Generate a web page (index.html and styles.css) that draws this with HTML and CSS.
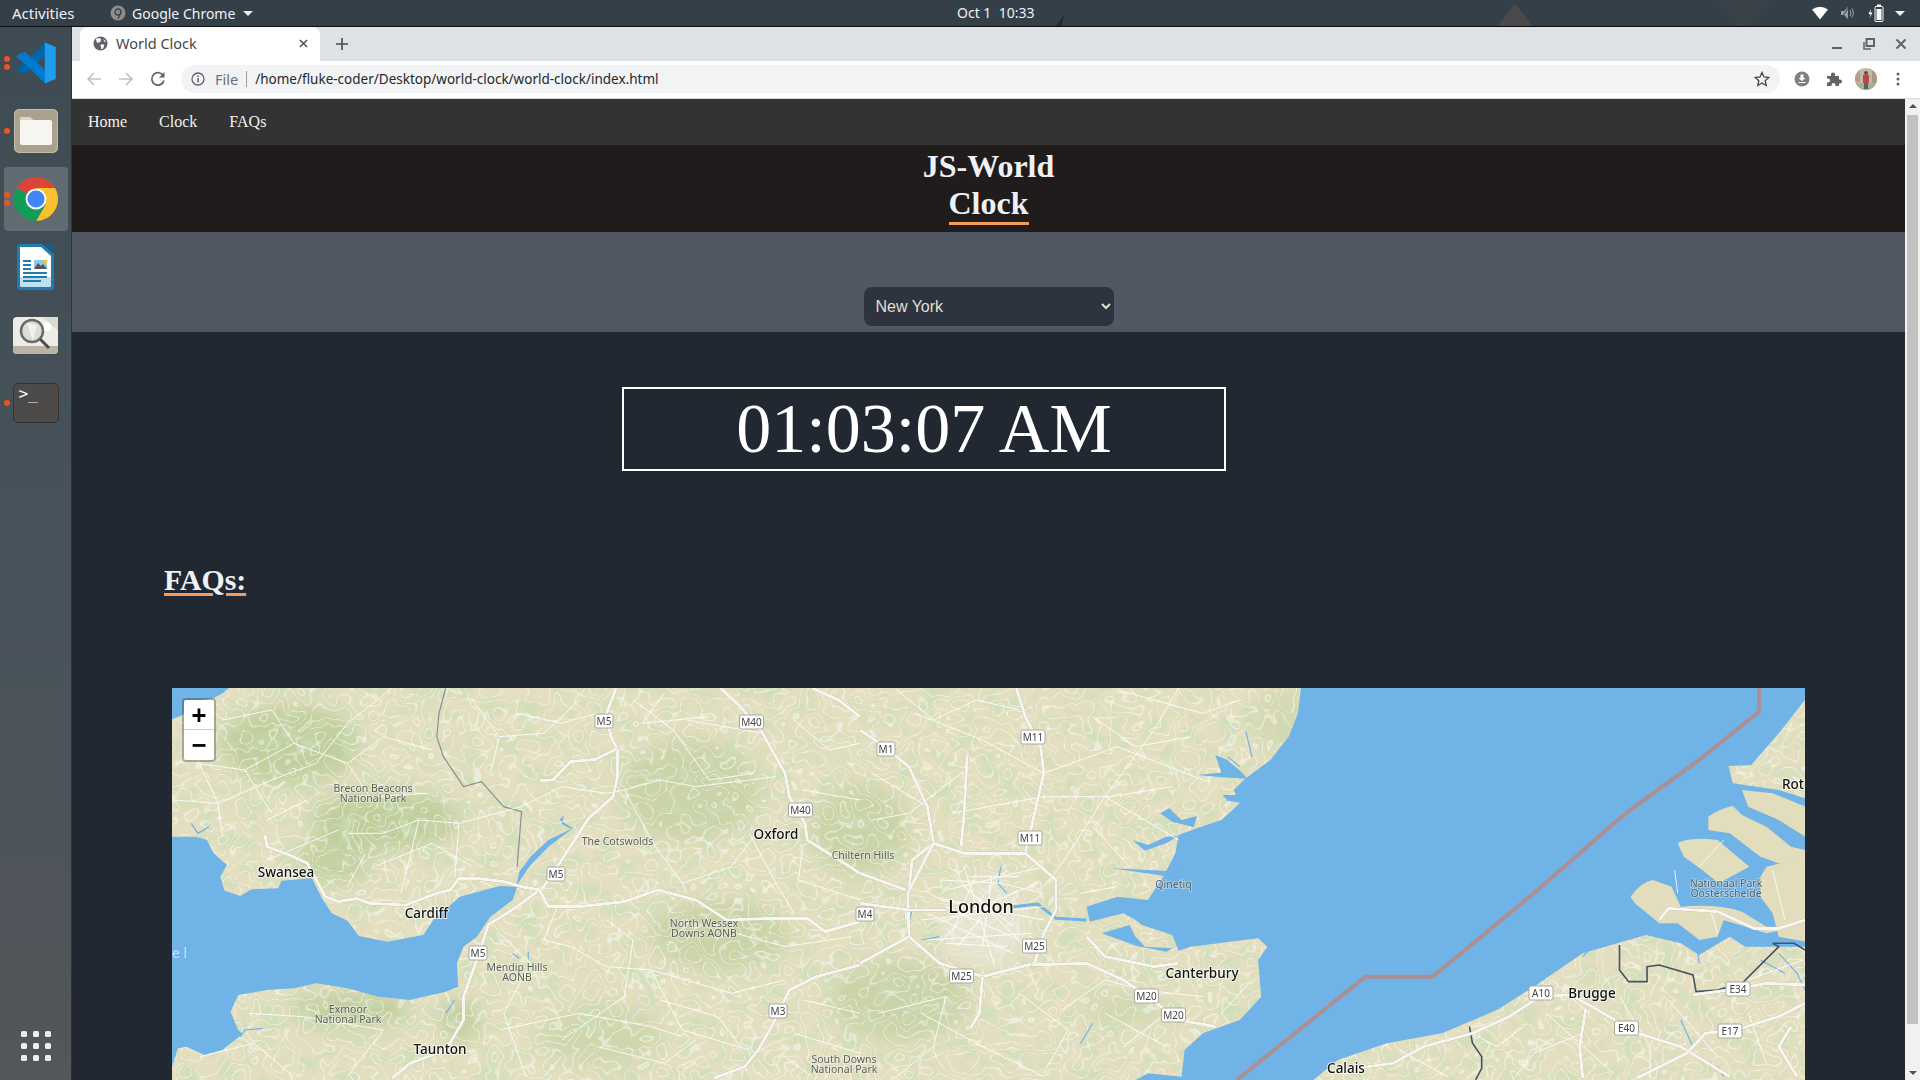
FILE: index.html
```html
<!DOCTYPE html>
<html lang="en">
<head>
<meta charset="utf-8">
<title>World Clock</title>
<link rel="stylesheet" href="styles.css">
</head>
<body>
<header class="topbar">
  <svg class="wall" viewBox="0 0 1920 26"><path d="M1498 26 L1515 3 L1532 26Z" fill="#4b4a4a"/><path d="M1056 26 L1064 15 L1062 26Z" fill="#23292f"/><path d="M1715 0 L1770 0 L1760 14 L1745 26 L1740 26Z" fill="#394247"/></svg>
  <span class="tb-activities">Activities</span>
  <span class="tb-app">
    <svg class="tb-chrome" viewBox="0 0 16 16"><circle cx="8" cy="8" r="7.500" fill="#8d8d8d"/><circle cx="8" cy="7" r="3" fill="none" stroke="#3b4249" stroke-width="1.300"/><path d="M11 7 L8 14" stroke="#3b4249" stroke-width="1.300"/></svg>
    Google Chrome <i class="caret"></i>
  </span>
  <span class="tb-clock">Oct 1&nbsp; 10:33</span>
  <span class="tb-tray">
    <svg class="tray-wifi" viewBox="0 0 16 14"><path d="M0 3.500 Q8 -2 16 3.500 L8 13.500Z" fill="#fff"/></svg>
    <svg class="tray-vol" viewBox="0 0 16 14"><path d="M1 5 H4 L8 1 V13 L4 9 H1Z" fill="#9aa0a4"/><path d="M10 4 Q12 7 10 10 M12 2.500 Q15 7 12 11.500" fill="none" stroke="#9aa0a4" stroke-width="1"/><path d="M1 13 L9 1" stroke="#343f48" stroke-width="1"/></svg>
    <svg class="tray-bat" viewBox="0 0 16 18"><path d="M3 5 L0.500 10 H2.500 L1.500 14 L4.500 8.500 H2.500Z" fill="#fff"/><rect x="7" y="2.500" width="8" height="15" rx="1" fill="none" stroke="#fff"/><rect x="9" y="0.500" width="4" height="2" fill="#fff"/><rect x="8.500" y="5" width="5" height="11" fill="#fff"/></svg>
    <i class="caret"></i>
  </span>
</header>
<div class="desk">
  <nav class="dock">
    <div class="dock-item">
      <span class="run run-two"></span>
      <svg class="ic-code" viewBox="0 0 100 100"><polygon fill="#0065a9" points="71,1 80,27 24,76 11,72 3,65 29,42"/><polygon fill="#007acc" points="3,35 11,28 24,24 80,73 71,99 29,58"/><polygon fill="#1f9cf0" points="71,1 97,12 97,88 71,99"/></svg>
    </div>
    <div class="dock-item">
      <span class="run"></span>
      <svg class="ic-files" viewBox="0 0 44 44"><rect width="44" height="44" rx="5" fill="#aaa18e"/><rect x=".5" y=".5" width="43" height="43" rx="5" fill="none" stroke="#c4bdac"/><path d="M6 10 a2 2 0 0 1 2-2 H16 L19 11 H36 a2 2 0 0 1 2 2 V34 a2 2 0 0 1-2 2 H8 a2 2 0 0 1-2-2Z" fill="#f7f5f1"/><path d="M6 10 a2 2 0 0 1 2-2 H16 L19 11 H8 a2 2 0 0 0-2 2Z" fill="#ddd6c6"/></svg>
    </div>
    <div class="dock-item dock-active">
      <span class="run run-two"></span>
      <svg class="ic-chrome" viewBox="0 0 48 48"><path d="M43.050 13 A22 22 0 0 0 4.950 13 L14.500 18.500 L24 13Z" fill="#db4437"/><path d="M43.050 13 A22 22 0 0 1 24 46 L33.500 29.500 L24 13Z" fill="#fbc02d"/><path d="M24 46 A22 22 0 0 1 4.950 13 L14.500 18.500 L33.500 29.500Z" fill="#0f9d58"/><circle cx="24" cy="24" r="10.500" fill="#f4f6f8"/><circle cx="24" cy="24" r="8.500" fill="#4285f4"/></svg>
    </div>
    <div class="dock-item">
      <svg class="ic-writer" viewBox="0 0 37 46"><path d="M3 0 H25 L37 10 V43 a3 3 0 0 1-3 3 H3 a3 3 0 0 1-3-3 V3 a3 3 0 0 1 3-3Z" fill="#1f7cb0"/><path d="M3 3 H24 L34 12 V41 a2 2 0 0 1-2 2 H5 a2 2 0 0 1-2-2Z" fill="#fff"/><path d="M3 33 H34 V41 a2 2 0 0 1-2 2 H5 a2 2 0 0 1-2-2Z" fill="#bfe0f0"/><path d="M27 0 H37 V9Z" fill="#155f8c"/><g fill="#1f7cb0"><rect x="6" y="16" width="8" height="2"/><rect x="6" y="20" width="8" height="2"/><rect x="6" y="24" width="8" height="2"/><rect x="6" y="28" width="24" height="2"/><rect x="6" y="32" width="24" height="2"/><rect x="6" y="36" width="18" height="2"/></g><rect x="17" y="16" width="13" height="9" fill="#8ec9e6"/><path d="M17 25 L21 19 L24 22 L26 20 L30 25Z" fill="#555"/><rect x="27" y="16" width="3" height="3" fill="#f2c94c"/></svg>
    </div>
    <div class="dock-item">
      <svg class="ic-search" viewBox="0 0 45 37"><rect width="45" height="37" rx="4" fill="#eeece6"/><path d="M0 29 H45 V33 a4 4 0 0 1-4 4 H4 a4 4 0 0 1-4-4Z" fill="#b9b4a2"/><path d="M30 0 L45 0 V14Z" fill="#dcd9d0"/><circle cx="34" cy="10" r="4.500" fill="#fff"/><circle cx="19" cy="14" r="11" fill="#dedcd6" stroke="#6a6a6a" stroke-width="2.500"/><path d="M14 6 L20 24 L24 8Z" fill="#f2f1ec"/><path d="M27 22 L36 31" stroke="#4b4b4b" stroke-width="3"/></svg>
    </div>
    <div class="dock-item">
      <span class="run"></span>
      <div class="ic-term">&gt;_</div>
    </div>
    <div class="apps">
      <i></i><i></i><i></i><i></i><i></i><i></i><i></i><i></i><i></i>
    </div>
  </nav>
  <div class="window">
    <div class="tabstrip">
      <div class="tab">
        <svg class="globe" viewBox="0 0 16 16"><circle cx="8" cy="8" r="7.500" fill="#5f6368"/><path d="M3 3 L7 2 L9 4 L7 7 L4 7Z M8 9 L12 9 L11 13 L9 14Z M11 3 L14 6 L12 6Z" fill="#fff"/></svg>
        <span class="tab-title">World Clock</span>
        <svg class="tab-x" viewBox="0 0 10 10"><path d="M1 1 L9 9 M9 1 L1 9" stroke="#45484c" stroke-width="1.600"/></svg>
      </div>
      <svg class="tab-new" viewBox="0 0 12 12"><path d="M6 0 V12 M0 6 H12" stroke="#45484c" stroke-width="1.600"/></svg>
      <div class="win-ctrl">
        <svg viewBox="0 0 12 12"><path d="M1 10 H11" stroke="#5f6368" stroke-width="2"/></svg>
        <svg viewBox="0 0 12 12"><rect x="3.500" y="1" width="7.500" height="7" fill="none" stroke="#5f6368" stroke-width="2"/><path d="M1 4 V11 H8" fill="none" stroke="#5f6368" stroke-width="1.500"/></svg>
        <svg viewBox="0 0 12 12"><path d="M1.500 1.500 L10.500 10.500 M10.500 1.500 L1.500 10.500" stroke="#5f6368" stroke-width="2"/></svg>
      </div>
    </div>
    <div class="toolbar">
      <svg class="tool" viewBox="0 0 16 16"><path d="M15 8 H2 M8 2 L2 8 L8 14" fill="none" stroke="#c0c2c5" stroke-width="1.600"/></svg>
      <svg class="tool" viewBox="0 0 16 16"><path d="M1 8 H14 M8 2 L14 8 L8 14" fill="none" stroke="#c0c2c5" stroke-width="1.600"/></svg>
      <svg class="tool" viewBox="0 0 16 16"><path d="M13.500 5 A6.200 6.200 0 1 0 14 9.500" fill="none" stroke="#5f6368" stroke-width="1.700"/><path d="M14.500 1 V6.500 H9Z" fill="#5f6368"/></svg>
      <div class="omnibox">
        <svg class="info" viewBox="0 0 14 14"><circle cx="7" cy="7" r="6" fill="none" stroke="#5f6368" stroke-width="1.300"/><rect x="6.300" y="6" width="1.500" height="4.500" fill="#5f6368"/><rect x="6.300" y="3.500" width="1.500" height="1.500" fill="#5f6368"/></svg>
        <span class="omni-file">File</span>
        <span class="omni-sep"></span>
        <span class="omni-url">/home/fluke-coder/Desktop/world-clock/world-clock/index.html</span>
        <svg class="star" viewBox="0 0 16 16"><path d="M8 1.500 L10 6 L14.800 6.500 L11.200 9.700 L12.200 14.500 L8 12 L3.800 14.500 L4.800 9.700 L1.200 6.500 L6 6Z" fill="none" stroke="#45484c" stroke-width="1.300"/></svg>
      </div>
      <div class="tool-right">
        <svg viewBox="0 0 16 16"><circle cx="8" cy="8" r="7.500" fill="#7d8083"/><path d="M6.500 3.500 H9.500 V7 H11.500 L8 10 L4.500 7 H6.500Z M4.500 11 H11.500 V12 H4.500Z" fill="#fff"/></svg>
        <svg viewBox="0 0 16 16"><path d="M1 5 H5 V3.500 a2 2 0 0 1 4 0 V5 H13 V8.500 H14 a2 2 0 0 1 0 4 H13 V15 H9.500 V14 a2 2 0 0 0-4 0 V15 H1 V11.500 H2 a2 2 0 0 0 0-4 H1Z" fill="#5f6368"/></svg>
        <svg class="avatar" viewBox="0 0 22 22"><defs><clipPath id="av"><circle cx="11" cy="11" r="11"/></clipPath></defs><g clip-path="url(#av)"><rect width="22" height="22" fill="#c9b6a6"/><rect y="15" width="22" height="7" fill="#a7ae9b"/><rect x="8" y="7" width="6" height="8" fill="#b8474a"/><circle cx="11" cy="5" r="2" fill="#6d4b3c"/><rect x="9" y="15" width="4" height="6" fill="#4f6a5a"/><rect x="0" y="2" width="5" height="12" fill="#b3a090"/><rect x="17" y="3" width="5" height="12" fill="#a99888"/></g></svg>
        <svg viewBox="0 0 16 16"><circle cx="8" cy="3" r="1.500" fill="#5f6368"/><circle cx="8" cy="8" r="1.500" fill="#5f6368"/><circle cx="8" cy="13" r="1.500" fill="#5f6368"/></svg>
      </div>
    </div>
    <div class="viewport">
      <main class="page">
        <nav class="sitenav">
          <a>Home</a><a>Clock</a><a>FAQs</a>
        </nav>
        <header class="hero">
          <h1><span>JS-World</span> <span class="hero-ul">Clock</span></h1>
        </header>
        <section class="picker">
          <select class="city"><option>New York</option><option>London</option><option>Tokyo</option></select>
        </section>
        <div class="clock">01:03:07 AM</div>
        <h2 class="faq">FAQs:</h2>
        <div class="map">
          <svg class="map-svg" viewBox="172 688 1633 392" preserveAspectRatio="none">
            <defs>
              <filter id="mottle" x="0" y="0" width="100%" height="100%">
                <feTurbulence type="fractalNoise" baseFrequency=".05 .06" numOctaves="5" seed="7"/>
                <feColorMatrix values="0 0 0 0 .60  0 0 0 0 .73  0 0 0 0 .48  3.200 0 0 0 -1.500"/>
              </filter>
              <filter id="mesh" x="0" y="0" width="100%" height="100%">
                <feTurbulence type="fractalNoise" baseFrequency=".04" numOctaves="2" seed="11"/>
                <feColorMatrix values="0 0 0 0 1  0 0 0 0 1  0 0 0 0 1  1 0 0 0 0"/>
                <feComponentTransfer><feFuncA type="table" tableValues="0 0 0 0 0 0 0 0 0 0 0 0 0 0 0 0 .9 0 0 0 0 0 0 0 .8 0 0 0 0 0 0 0 .9 0 0 0 0 0 0 0 0 0 0 0 0 0 0 0 0 0"/></feComponentTransfer>
              </filter>
              <filter id="soft" x="-20%" y="-20%" width="140%" height="140%"><feGaussianBlur stdDeviation="9"/></filter>
            </defs>
            <rect x="172" y="688" width="1633" height="392" fill="#e3dfc0"/>
            <g filter="url(#soft)" fill="#b4c88f">
              <ellipse cx="290" cy="745" rx="70" ry="40" opacity=".7"/>
              <ellipse cx="385" cy="820" rx="75" ry="30" opacity=".75"/>
              <ellipse cx="335" cy="860" rx="40" ry="25" opacity=".6"/>
              <ellipse cx="350" cy="1010" rx="60" ry="18" opacity=".7"/>
              <ellipse cx="460" cy="1020" rx="20" ry="22" opacity=".7"/>
              <ellipse cx="690" cy="790" rx="70" ry="50" opacity=".5"/>
              <ellipse cx="720" cy="935" rx="70" ry="35" opacity=".5"/>
              <ellipse cx="860" cy="830" rx="50" ry="45" opacity=".5"/>
              <ellipse cx="600" cy="1035" rx="60" ry="30" opacity=".4"/>
              <ellipse cx="900" cy="1000" rx="70" ry="40" opacity=".5"/>
              <ellipse cx="1120" cy="1010" rx="35" ry="15" opacity=".35"/>
              <ellipse cx="1280" cy="720" rx="25" ry="30" opacity=".3"/>
            </g>
            <rect x="172" y="688" width="1633" height="392" filter="url(#mottle)" opacity=".75"/>
            <rect x="172" y="688" width="1633" height="392" filter="url(#mesh)" opacity=".65"/>
            <ellipse cx="985" cy="925" rx="44" ry="42" fill="#ece8dc" filter="url(#soft)" opacity=".6"/>

            <g class="z4" transform="translate(160 680) scale(.4464 .3333)">
              <path class="sea" d="M27 24 H155 L140 40 L120 55 L85 62 L50 105 L27 118Z"/>
              <path class="sea" d="M27 470 L80 470 L105 480 L120 520 L150 555 L135 590 L145 632 L180 648 L205 628 L265 625 L272 602 L340 595 L365 660 L385 700 L420 722 L445 768 L510 785 L590 765 L612 720 L672 650 L760 618 L800 620 L790 660 L740 710 L710 770 L680 800 L665 850 L668 920 L640 935 L560 960 L490 950 L420 925 L350 910 L300 925 L240 930 L175 945 L158 995 L175 1050 L185 1062 L140 1110 L100 1125 L60 1100 L40 1105 L27 1160Z"/>
              <path class="sea" d="M798 618 L830 555 L870 500 L922 448 L900 432 L905 405 L895 420 L925 445 L870 480 L830 530 L805 575Z"/>
              <path class="river" d="M70 430 L85 460 L110 440 M640 1000 L660 960 M180 1070 L190 1050 L230 1045 M790 820 L805 835 M825 815 L825 838"/>
              <path class="wales" d="M640 24 L625 100 L620 170 L635 230 L680 320 L720 305 L770 380 L810 395 L800 560"/>
              <path class="minor" d="M27 360 L130 370 L250 300 L350 250 L420 130 L520 24 M130 370 L140 470 M420 460 L500 460 L580 420 L670 430 L810 380 L900 320 L1000 340 M580 420 L540 640 M670 430 L660 590 M400 450 L240 540 M1000 340 L1040 330 L1120 300 L1200 320 L1380 290 M1040 330 L1110 500 L1170 610 L1180 640 M1170 610 L1280 560 L1330 470 M890 680 L860 780 L920 800 L1000 860 L1100 870 L1170 1050 L1320 1110 M1100 870 L1280 940 L1400 900 M760 1050 L940 1000 L1100 1040 L1170 1070 M1320 460 L1380 610 L1420 700 M800 100 L900 130 L980 100 M1060 60 L1150 150 L1230 300 M1180 120 L1350 160"/>
              <path class="minor" d="M140 120 L250 90 L300 190 L190 270 L80 250 M300 190 L420 250 L500 170 L610 210 M190 270 L250 400 M420 250 L470 350 L600 340 M60 170 L130 370 M700 60 L760 170 L860 160 L940 60 M760 170 L740 280 M1130 40 L1080 130 L1230 110 M1420 120 L1500 210 L1568 190 M1230 300 L1330 280 M1440 330 L1568 360 M1440 500 L1430 600 L1568 660 M1290 760 L1400 800 L1550 770 M1000 720 L1060 780 L1040 950 L900 1080 M760 760 L830 850 L770 1000 L820 1190 M200 1000 L320 1010 L500 1050 L420 1190 M90 1130 L210 1090 L300 1190 M1120 960 L1250 1010 L1300 1100 M1440 960 L1568 1000 M1420 1060 L1568 1120 M980 1100 L1130 1150 L1200 1080 M900 1130 L860 1190 M1400 1130 L1460 1190 M480 560 L610 490 L700 560 M240 420 L330 360 M460 520 L420 620"/>
              <path class="road" d="M1022 24 L1000 100 L1010 170 L1025 210 L1025 290 L1015 350 L960 415 L900 540 L860 620 L800 680 L735 735 L715 820 L680 950 L680 1020 L640 1110 L560 1150 L520 1195"/>
              <path class="road" d="M235 465 L240 500 L290 525 L330 550 L370 650 L400 665 L440 655 L470 670 L550 675 L620 640 L650 630 L670 595 L710 595 L770 605 L810 620 L850 630 L870 680 L940 680 L1040 665 L1115 630 L1200 660 L1270 720 L1370 715 L1450 715 L1490 755 L1568 725"/>
              <path class="road" d="M850 302 L880 300 L920 245 L975 238 L1025 205"/>
              <path class="road" d="M1255 24 L1300 80 L1350 160 L1400 280 L1410 350 L1445 430 L1450 480 L1510 530 L1568 580"/>
              <path class="road" d="M1460 24 L1520 60 L1568 110"/>
              <path class="road" d="M1568 855 L1470 890 L1410 930 L1370 1040 L1340 1110 L1310 1160 L1240 1195"/>
            </g>

            <g class="z5" transform="translate(860 680) scale(.6125 .3333)">
              <path class="sea" d="M720 24 H1543 V60 L1500 160 L1455 255 L1418 258 L1425 310 L1500 330 L1543 355 V800 L1490 800 L1445 800 L1420 770 L1370 825 L1340 790 L1283 765 L1180 820 L1100 920 L1040 990 L950 1060 L860 1090 L780 1140 L740 1200 H450 L470 1180 L525 1190 L530 1110 L560 1060 L620 1020 L655 950 L650 840 L665 800 L650 775 L540 800 L520 812 L510 765 L460 735 L450 720 L430 700 L375 725 L370 680 L420 650 L470 660 L495 590 L515 520 L520 465 L550 445 L590 420 L620 370 L610 330 L630 295 L670 240 L700 170 L715 100Z"/>
              <path class="sea" d="M550 285 L590 278 L580 225 L600 240 L625 280 L632 296 L590 292Z"/>
              <path class="sea" d="M445 480 L470 495 L500 470 L520 468 L500 490 L465 512Z"/>
              <path class="sea" d="M410 565 L470 570 L522 575 L495 587 L440 572Z"/>
              <path class="sea" d="M490 400 L505 385 L525 420 L550 408 L545 442 L510 425Z"/>
              <path class="sea" d="M395 760 L440 735 L450 770 L465 800 L510 805 L500 815 L450 797 L425 780Z"/>
              <path class="sea" d="M592 345 L615 345 L620 368 L600 362Z"/>
              <path class="land" d="M1385 410 Q1405 385 1425 378 L1440 405 L1480 440 L1520 500 L1543 510 V540 L1500 550 L1470 530 L1420 460 L1385 450Z"/>
              <path class="land" d="M1335 490 Q1350 470 1400 480 L1452 560 L1402 610 L1375 570 L1345 530Z"/>
              <path class="land" d="M1258 650 Q1275 605 1295 600 L1325 620 L1340 680 Q1400 670 1440 695 L1480 740 L1505 750 L1480 760 L1410 720 L1400 770 L1370 780 L1335 730 L1305 730 L1265 670Z"/>
              <path class="land" d="M1470 590 L1480 560 L1543 530 V785 L1500 770 L1490 700 L1470 650Z"/>
              <path class="land" d="M1440 330 L1490 340 L1543 380 V470 L1500 420 L1450 380Z"/>
              <path class="river wide" d="M250 680 L290 672 L320 715 L370 720"/>
              <path class="river" d="M630 155 L640 230 M600 230 L620 260 M1190 810 L1180 830 M1365 780 L1370 850 M1500 820 L1530 880 L1543 930 M1340 1020 L1360 1100 M1400 1160 L1410 1190 M380 1030 L360 1090 M100 780 L130 770 M85 690 L80 730 M230 560 L225 610 L240 640 M1470 840 L1510 880"/>
              <path class="bline" d="M1240 795 L1240 870 L1255 905 L1285 905 L1285 860 L1305 855 L1360 885 L1365 935 L1400 930 L1440 910 L1500 800 L1490 790 L1525 790 L1543 810"/>
              <path class="bline" d="M995 1040 L1000 1090 L1015 1130 L1015 1165 L1005 1200"/>
              <path class="border" d="M1468 24 L1468 95 L1370 240 L1250 400 L1100 640 L935 890 L825 890 L615 1200"/>
              <path class="minor" d="M520 24 L480 150 L400 350 L330 550 L300 620 M90 100 L200 180 L300 280 L420 200 L560 300 M150 400 L300 350 L410 350 L510 320 M400 350 L520 480 M360 640 L420 620 M330 990 L400 900 L460 930 L560 950 M100 1000 L200 1100 L300 1190 M430 1100 L500 1000 M1070 1190 L1100 1120 L1180 1060 M1240 950 L1290 1100 L1290 1190 M1000 1060 L1040 1100 L1090 1030 M1450 900 L1540 840 M1330 570 L1335 640 M1410 480 L1370 560 M1490 570 L1510 720"/>
              <path class="minor" d="M130 600 L230 610 L300 640 M140 680 L260 780 M170 560 L220 860 M100 720 L300 680 M110 780 L280 760 M140 630 L300 560 M160 800 L230 640 M170 620 L250 740 M120 650 L240 700 M190 580 L150 760 M215 590 L200 800 M130 730 L290 610 M150 580 L270 800 M110 700 L250 820 M240 570 L120 810 M130 660 L300 720 M180 590 L260 590 M140 790 L240 800"/>
              <path class="minor" d="M60 30 L120 120 L190 60 L260 90 M420 30 L560 100 L620 60 M380 110 L450 200 L540 170 M180 260 L80 400 L20 420 M20 280 L110 380 M380 440 L440 560 M30 1000 L140 950 L120 1100 L60 1190 M260 940 L340 1050 L300 1180 M400 1000 L500 1100 M1120 1000 L1230 1180 M1130 900 L1190 1000 M1320 960 L1400 1130 M1450 1000 L1480 1150 M880 1110 L960 1190 M1390 700 L1400 760 M590 1000 L640 900"/>
              <path class="road" d="M0 150 L40 200 L80 260 L110 380 L120 490 L85 540 L75 720"/>
              <path class="road" d="M255 24 L270 110 L295 200 L300 280 L280 440 L270 515"/>
              <path class="road" d="M120 490 L170 520 L270 520 L320 600 L320 690 L300 760 L285 850 L200 890 L130 850 L80 770 L78 640 L120 490"/>
              <path class="road" d="M0 580 L75 630 M0 670 L80 690 L140 690 M80 770 L0 850"/>
              <path class="road" d="M280 855 L370 850 L430 900 L470 950 L520 1020 L580 1040"/>
              <path class="road" d="M370 770 L400 830 L480 860 L520 850"/>
              <path class="road" d="M200 890 L195 1000 L180 1045"/>
              <path class="road" d="M175 225 L170 400 L165 500"/>
              <path class="road" d="M790 1170 L870 1150 L920 1100 L1000 1060 L1060 1010 L1110 950 L1160 945 L1200 985 L1270 1060 L1340 1100 L1420 1190"/>
              <path class="road" d="M1268 1195 L1350 1120 L1380 1060 L1430 1050 L1500 1010 L1543 970"/>
              <path class="road" d="M1360 945 L1420 930 L1480 910 L1543 915"/>
              <path class="road" d="M1305 720 L1320 685 L1400 695 L1460 745 L1500 745 L1543 720"/>
              <path class="road" d="M1185 985 L1175 1100 L1180 1195"/>
              <path class="road" d="M1520 1040 L1500 1100 L1530 1190"/>
            </g>

            <g class="shields">
              <g transform="translate(604 721)"><rect x="-9" y="-7" width="18" height="14"/><text>M5</text></g>
              <g transform="translate(751.500 722)"><rect x="-12" y="-7" width="24" height="14"/><text>M40</text></g>
              <g transform="translate(800.500 810)"><rect x="-12" y="-7" width="24" height="14"/><text>M40</text></g>
              <g transform="translate(556 874)"><rect x="-9" y="-7" width="18" height="14"/><text>M5</text></g>
              <g transform="translate(478 953)"><rect x="-9" y="-7" width="18" height="14"/><text>M5</text></g>
              <g transform="translate(778 1011)"><rect x="-9" y="-7" width="18" height="14"/><text>M3</text></g>
              <g transform="translate(886 749)"><rect x="-9" y="-7" width="18" height="14"/><text>M1</text></g>
              <g transform="translate(1033 737)"><rect x="-12" y="-7" width="24" height="14"/><text>M11</text></g>
              <g transform="translate(1030 838)"><rect x="-12" y="-7" width="24" height="14"/><text>M11</text></g>
              <g transform="translate(865 914)"><rect x="-9" y="-7" width="18" height="14"/><text>M4</text></g>
              <g transform="translate(1034.500 946)"><rect x="-12" y="-7" width="24" height="14"/><text>M25</text></g>
              <g transform="translate(961.500 976)"><rect x="-12" y="-7" width="24" height="14"/><text>M25</text></g>
              <g transform="translate(1146.500 996)"><rect x="-12" y="-7" width="24" height="14"/><text>M20</text></g>
              <g transform="translate(1173.500 1015)"><rect x="-12" y="-7" width="24" height="14"/><text>M20</text></g>
              <g transform="translate(1541 993)"><rect x="-12" y="-7" width="24" height="14"/><text>A10</text></g>
              <g transform="translate(1626.500 1028)"><rect x="-12" y="-7" width="24" height="14"/><text>E40</text></g>
              <g transform="translate(1730 1031)"><rect x="-12" y="-7" width="24" height="14"/><text>E17</text></g>
              <g transform="translate(1738 989)"><rect x="-12" y="-7" width="24" height="14"/><text>E34</text></g>
            </g>

            <g class="city-labels">
              <text x="286" y="877">Swansea</text>
              <text x="426.500" y="918">Cardiff</text>
              <text x="440" y="1054">Taunton</text>
              <text x="776" y="839">Oxford</text>
              <text x="1202" y="978">Canterbury</text>
              <text x="1592" y="998">Brugge</text>
              <text x="1346" y="1073">Calais</text>
              <text x="1793" y="789">Rot</text>
              <text class="capital" x="981" y="913">London</text>
            </g>
            <g class="park-labels">
              <text><tspan x="373" y="792">Brecon Beacons</tspan><tspan x="373" dy="10">National Park</tspan></text>
              <text x="617.500" y="845">The Cotswolds</text>
              <text x="863" y="859">Chiltern Hills</text>
              <text><tspan x="704" y="927">North Wessex</tspan><tspan x="704" dy="10">Downs AONB</tspan></text>
              <text><tspan x="517" y="971">Mendip Hills</tspan><tspan x="517" dy="9.500">AONB</tspan></text>
              <text><tspan x="348" y="1013">Exmoor</tspan><tspan x="348" dy="10">National Park</tspan></text>
              <text><tspan x="844" y="1063">South Downs</tspan><tspan x="844" dy="10">National Park</tspan></text>
              <text x="1173.500" y="888">Qinetiq</text>
              <text><tspan x="1726" y="887">Nationaal Park</tspan><tspan x="1726" dy="10">Oosterschelde</tspan></text>
            </g>
            <text class="sea-label" x="172" y="958">e l</text>
          </svg>
          <div class="zoomctl">
            <a>+</a>
            <a>−</a>
          </div>
        </div>
      </main>
      <aside class="scrollbar">
        <i class="sb-up"></i>
        <div class="sb-thumb"></div>
        <i class="sb-down"></i>
      </aside>
    </div>
  </div>
</div>
</body>
</html>
```
FILE: styles.css
```css
* { box-sizing: border-box; }
html, body { margin: 0; height: 100%; overflow: hidden; }
body { display: flex; flex-direction: column; width: 1920px; height: 1080px; background: #3f4b53; font-family: "Noto Sans", "Open Sans", sans-serif; }

.topbar { position: relative; flex: 0 0 27px; display: flex; align-items: center; height: 27px; background: #343f48; border-bottom: 1px solid #0c0f12; color: #eef1f3; font-size: 14px; }
.wall { position: absolute; left: 0; top: 0; width: 1920px; height: 26px; }
.tb-activities { position: relative; margin-left: 12px; width: 98px; font-size: 15px; }
.tb-app { position: relative; display: flex; align-items: center; gap: 6px; }
.tb-chrome { width: 16px; height: 16px; }
.caret { display: inline-block; width: 0; height: 0; border-left: 5px solid transparent; border-right: 5px solid transparent; border-top: 5px solid #eef1f3; margin-left: 2px; }
.tb-clock { position: absolute; left: 957px; top: 3px; }
.tb-tray { position: absolute; right: 15px; top: 4px; display: flex; align-items: center; }
.tray-wifi { width: 16px; height: 14px; margin-right: 12px; }
.tray-vol { width: 16px; height: 14px; margin-right: 12px; }
.tray-bat { width: 16px; height: 18px; margin-right: 9px; }

.desk { flex: 1; display: flex; min-height: 0; }
.dock { flex: 0 0 72px; display: flex; flex-direction: column; padding: 2px 0 0; background: linear-gradient(180deg, #3f4b53 0%, #47525a 50%, #53565a 100%); border-right: 1px solid #2e3338; }
.dock-item { position: relative; flex: 0 0 68px; display: flex; align-items: center; justify-content: center; }
.dock-active::before { content: ""; position: absolute; left: 4px; top: 2px; width: 64px; height: 64px; border-radius: 4px; background: rgba(255, 255, 255, .17); }
.dock-item svg, .ic-term { position: relative; }
.run { position: absolute; left: 4px; top: 31px; width: 6px; height: 6px; border-radius: 50%; background: #e95420; }
.run-two { top: 27px; box-shadow: 0 8px 0 #e95420; }
.ic-code { width: 42px; height: 42px; margin-left: 1px; }
.ic-files { width: 44px; height: 44px; }
.ic-chrome { width: 48px; height: 48px; }
.ic-writer { width: 37px; height: 46px; }
.ic-search { width: 45px; height: 37px; }
.ic-term { width: 46px; height: 40px; border-radius: 5px; background: #4d4b49; border: 1px solid #33312f; padding: 2px 0 0 5px; color: #f4f4f4; font: 16px/16px "DejaVu Sans Mono", monospace; }
.apps { margin-top: auto; margin-bottom: 19px; margin-left: 21px; display: grid; grid-template-columns: repeat(3, 6px); gap: 6px; }
.apps i { width: 6px; height: 6px; border-radius: 1.500px; background: #eeeeee; }

.window { flex: 1; min-width: 0; display: flex; flex-direction: column; }
.tabstrip { flex: 0 0 34px; display: flex; align-items: flex-end; background: #dee1e6; position: relative; }
.tab { width: 240px; height: 34px; margin-left: 8px; background: #fff; border-radius: 8px 8px 0 0; display: flex; align-items: center; padding: 0 0 2px 13px; }
.globe { width: 15px; height: 15px; }
.tab-title { margin-left: 8px; font-size: 14.500px; color: #45484c; flex: 1; }
.tab-x { width: 9px; height: 9px; margin-right: 12px; }
.tab-new { width: 12px; height: 12px; margin: 0 0 11px 16px; }
.win-ctrl { margin-left: auto; display: flex; gap: 20px; margin-bottom: 11px; margin-right: 13px; }
.win-ctrl svg { width: 12px; height: 12px; }

.toolbar { flex: 0 0 38px; display: flex; align-items: center; background: #fff; border-bottom: 1px solid #d9dadc; padding: 0 0 1px 14px; }
.tool { width: 16px; height: 16px; margin-right: 16px; }
.omnibox { width: 1599px; height: 28px; margin-left: -1px; border-radius: 14px; background: #f1f3f4; display: flex; align-items: center; padding: 0 0 0 10px; font-size: 13.500px; }
.info { width: 14px; height: 14px; }
.omni-file { margin-left: 10px; color: #6e7175; font-size: 14.500px; }
.omni-sep { width: 1px; height: 16px; margin: 0 8px; background: #9a9da1; }
.omni-url { color: #25282c; flex: 1; }
.star { width: 16px; height: 16px; margin-right: 10px; }
.tool-right { display: flex; align-items: center; margin-left: 14px; gap: 16px; }
.tool-right svg { width: 16px; height: 16px; }
.tool-right .avatar { width: 22px; height: 22px; margin: 0 -3px; }

.viewport { flex: 1; min-height: 0; display: flex; }
.page { flex: 1; min-width: 0; background: #222831; overflow: hidden; font-family: "Liberation Serif", serif; }
.sitenav { display: flex; background: #333333; }
.sitenav a { padding: 14px 16px; font-size: 16px; line-height: 18px; color: #f2f2f2; }
.hero { height: 87px; background: #1f1c1b; padding-top: 3px; text-align: center; }
.hero h1 { margin: 0 auto; width: 200px; font-size: 32px; line-height: 37px; font-weight: bold; color: #eef1f5; }
.hero-ul { display: inline-block; height: 40px; border-bottom: 3px solid #f49b5b; }
.picker { height: 100px; background: #515864; padding-top: 55px; display: flex; justify-content: center; }
.city { width: 250px; height: 39px; border: 0; border-radius: 8px; background: #2d3440; color: #e6dfd2; padding-left: 8px; font: 16px "Liberation Sans", sans-serif; }
.clock { width: 604px; height: 84px; margin: 55px 0 0 550px; border: 2px solid #fff; color: #fff; font-size: 70px; line-height: 80px; text-align: center; }
.faq { margin: 92px 0 0 92px; font-size: 29.800px; line-height: 34px; font-weight: bold; color: #eef1f5; text-decoration: underline; text-decoration-color: #f49b5b; text-decoration-thickness: 3px; text-underline-offset: 3px; }
.map { position: relative; height: 392px; margin: 91px 100px 0; overflow: hidden; background: #e3dfc0; }
.map-svg { display: block; width: 100%; height: 100%; }
.sea { fill: #70b3e6; }
.land { fill: #e1ddbd; }
.river { fill: none; stroke: #70b3e6; stroke-width: 1.200px; vector-effect: non-scaling-stroke; }
.wide { stroke-width: 3px; }
.road { fill: none; stroke: #f8f6ef; stroke-width: 3.200px; vector-effect: non-scaling-stroke; filter: drop-shadow(0 0 .7px #8f8a7a); }
.minor { fill: none; stroke: #fff; stroke-width: 1px; opacity: .85; vector-effect: non-scaling-stroke; }
.border { fill: none; stroke: #ab8f92; stroke-width: 4px; vector-effect: non-scaling-stroke; }
.bline { fill: none; stroke: #46525e; stroke-width: 1.600px; vector-effect: non-scaling-stroke; }
.wales { fill: none; stroke: #6f7f84; stroke-width: 1.200px; opacity: .8; vector-effect: non-scaling-stroke; }
.shields rect { fill: #fff; stroke: #a9a9a2; stroke-width: 1px; rx: 2px; }
.shields text { font: 10px "Noto Sans", sans-serif; fill: #444; text-anchor: middle; dominant-baseline: central; }
.city-labels text { font: 500 13.500px "Noto Sans", sans-serif; fill: #111; text-anchor: middle; paint-order: stroke; stroke: #fff; stroke-width: 2px; stroke-opacity: .7; }
.city-labels .capital { font-size: 18px; }
.park-labels text { font: 10.500px "Noto Sans", sans-serif; fill: #5b5f58; text-anchor: middle; paint-order: stroke; stroke: #fff; stroke-width: 1.500px; stroke-opacity: .45; }
.sea-label { font: 14px "Noto Sans", sans-serif; fill: #cfe3f4; }
.zoomctl { position: absolute; left: 10px; top: 10px; width: 34px; border: 2px solid rgba(0, 0, 0, .25); border-radius: 4px; background-clip: padding-box; }
.zoomctl a { display: block; width: 30px; height: 30px; background: #fff; color: #000; text-align: center; font: bold 24px/30px "DejaVu Sans Mono", monospace; }
.zoomctl a:first-child { border-radius: 2px 2px 0 0; border-bottom: 1px solid #ccc; }
.zoomctl a:last-child { border-radius: 0 0 2px 2px; }

.scrollbar { flex: 0 0 15px; background: #f1f1f1; display: flex; flex-direction: column; align-items: center; position: relative; }
.sb-up { position: absolute; top: 5px; left: 4px; border-left: 4px solid transparent; border-right: 4px solid transparent; border-bottom: 4px solid #505050; }
.sb-down { position: absolute; bottom: 5px; left: 4px; border-left: 4px solid transparent; border-right: 4px solid transparent; border-top: 4px solid #505050; }
.sb-thumb { width: 11px; height: 909px; margin-top: 16px; background: #c1c1c1; }
```
